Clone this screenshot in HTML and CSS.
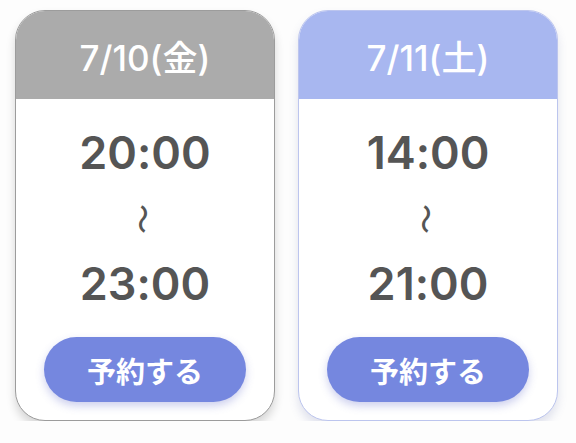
FILE: index.html
```html
<!DOCTYPE html>
<html lang="ja">
<head>
    <meta charset="UTF-8">
    <meta name="viewport" content="width=device-width, initial-scale=1.0">
    <title>予約枠</title>
    <link rel="stylesheet" href="styles.css">
</head>
<body>

<div class="slots">
    <div class="slot slot-fri">
        <div class="slot-date">7/10(金)</div>
        <div class="slot-body">
            <div class="slot-time">20:00</div>
            <div class="slot-sep"><span>〜</span></div>
            <div class="slot-time">23:00</div>
            <button class="reserve-btn">予約する</button>
        </div>
    </div>
    <div class="slot slot-sat">
        <div class="slot-date">7/11(土)</div>
        <div class="slot-body">
            <div class="slot-time">14:00</div>
            <div class="slot-sep"><span>〜</span></div>
            <div class="slot-time">21:00</div>
            <button class="reserve-btn">予約する</button>
        </div>
    </div>
</div>

</body>
</html>
```

FILE: styles.css
```css
body {
    margin: 0;
    background-color: #fdfdfd;
    font-family: Inter, "Noto Sans CJK JP", sans-serif;
    font-feature-settings: "calt" 0;
}
.slots {
    display: flex;
    gap: 23px;
    padding: 10px 0 0 15px;
}
.slot {
    width: 260px;
    height: 411px;
    box-sizing: border-box;
    border-radius: 30px;
    background: white;
    overflow: hidden;
    display: flex;
    flex-direction: column;
}
.slot-fri {
    border: 1.5px solid #9c9c9c;
    box-shadow: 0 6px 10px rgba(0, 0, 0, 0.16);
}
.slot-sat {
    border: 1.5px solid #bcc5ee;
    box-shadow: 0 6px 10px rgba(90, 100, 160, 0.18);
}
.slot-date {
    height: 88px;
    display: flex;
    align-items: center;
    justify-content: center;
    color: white;
    font-size: 35px;
    font-weight: 500;
}
.slot-fri .slot-date {
    background-color: #ababab;
}
.slot-sat .slot-date {
    background-color: #a8b7f0;
}
.slot-body {
    flex: 1;
    display: flex;
    flex-direction: column;
    align-items: center;
    padding-top: 22px;
}
.slot-time {
    font-size: 45px;
    font-weight: 600;
    line-height: 64px;
    color: #555;
}
.slot-sep {
    height: 67px;
    display: flex;
    align-items: center;
    justify-content: center;
    color: #555;
    font-size: 30px;
    font-weight: 500;
}
.slot-sep span {
    display: block;
    transform: rotate(90deg);
}
.reserve-btn {
    margin-top: 21px;
    width: 202px;
    height: 65px;
    border: none;
    border-radius: 33px;
    background-color: #7587df;
    color: white;
    font-family: inherit;
    font-size: 29px;
    font-weight: 700;
    box-shadow: 0 4px 8px rgba(90, 100, 200, 0.3);
    cursor: pointer;
}
```
